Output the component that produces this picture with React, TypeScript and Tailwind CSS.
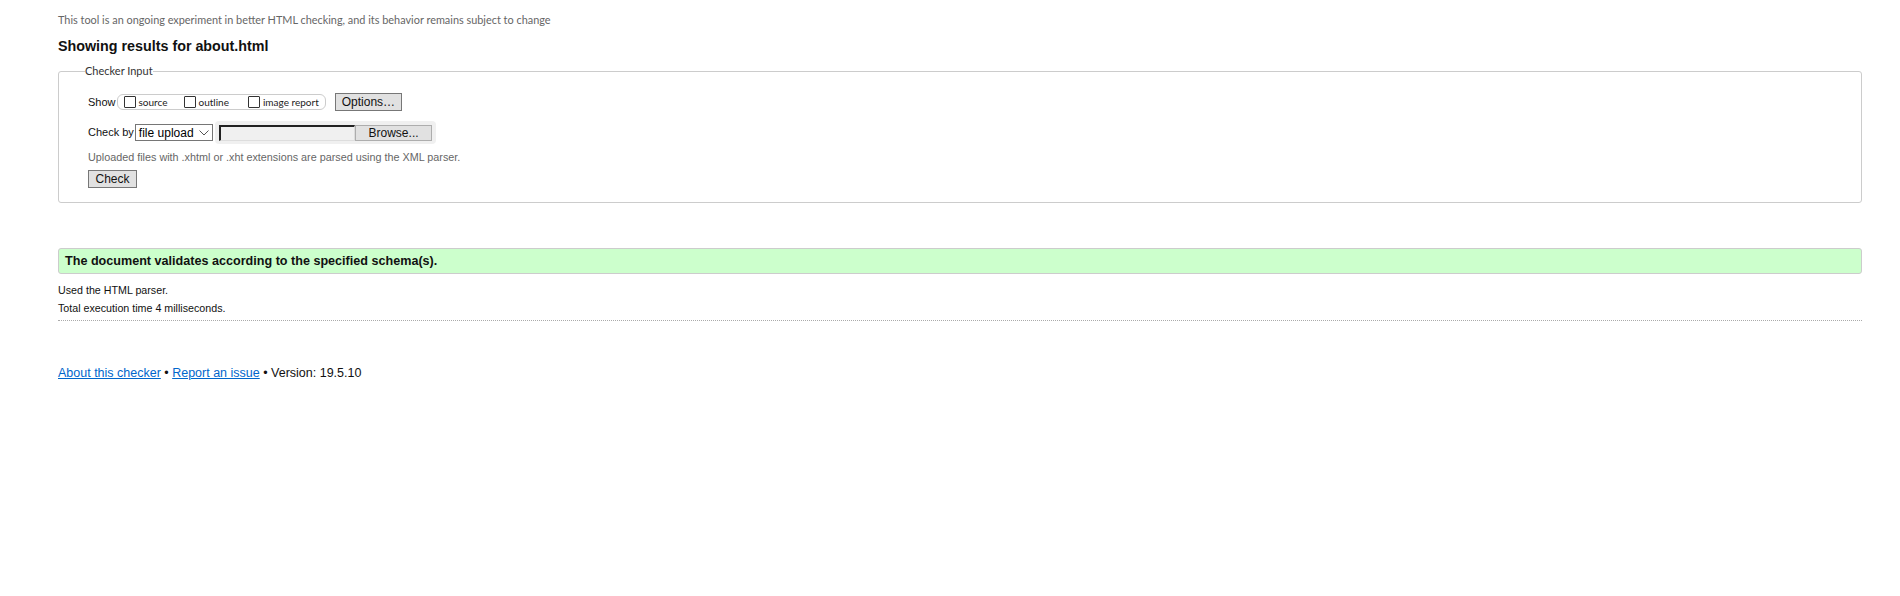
import React from "react";

const sans = "font-['Liberation_Sans',Arial,sans-serif]";
const ui = "font-['Lato','Liberation_Sans',sans-serif]";

function Box({ label }: { label: string }) {
  return (
    <label className="flex items-center gap-[3px]">
      <span className="w-[12px] h-[12px] border border-[#333] bg-white rounded-[1px]" />
      <span className={`${ui} text-[10px] text-[#222]`}>{label}</span>
    </label>
  );
}

export default function App() {
  return (
    <div className={`${sans} bg-white min-h-[596px] pl-[58px] pr-[38px] text-[#111]`}>
      <p className={`${ui} text-[10.9px] text-[#666] pt-[13px] leading-[14px]`}>
        This tool is an ongoing experiment in better HTML checking, and its behavior remains subject to change
      </p>
      <h2 className="text-[14.3px] font-bold mt-[11px] leading-[16px]">Showing results for about.html</h2>

      <fieldset className="mt-[10px] border border-[#ccc] rounded-[3px] px-[29px] pb-[12px]">
        <legend className={`${ui} -ml-[3px] text-[11px] text-[#333] leading-[14px]`}>Checker Input</legend>

        <div className="flex items-center h-[18px] mt-[15px] text-[11px]">
          <span>Show</span>
          <div className="ml-[1px] flex items-center h-[16px] border border-[#ccc] rounded-[6px] pl-[6px] pr-[6px]">
            <Box label="source" />
            <span className="w-[16px]" />
            <Box label="outline" />
            <span className="w-[19px]" />
            <Box label="image report" />
          </div>
          <button className="ml-[9px] h-[18px] px-[6px] bg-[#e1e1e1] border border-[#777] text-[12px] leading-none">
            Options…
          </button>
        </div>

        <div className="flex items-center h-[23px] mt-[10px] text-[11px]">
          <span>Check by</span>
          <div className="ml-[1px] flex items-center h-[17px] w-[78px] border border-[#767676] pl-[3px] pr-[3px] text-[12px] text-black">
            <span className="flex-1">file upload</span>
            <svg width="10" height="6" viewBox="0 0 10 6" fill="none" stroke="#555" strokeWidth="1">
              <path d="M0.5 0.5L5 5L9.5 0.5" />
            </svg>
          </div>
          <div className="ml-[2px] flex items-center h-[23px] bg-[#f0f0f0] rounded-[4px] px-[4px] w-[221px]">
            <div className="h-[16px] w-[137px] bg-[#f0f0f0] border-t-[2px] border-l-[2px] border-b border-r border-t-[#222] border-l-[#222] border-b-[#ddd] border-r-[#ddd]" />
            <button className="h-[16px] w-[77px] bg-[#e1e1e1] border border-[#adadad] text-[12px] leading-none">
              Browse...
            </button>
          </div>
        </div>

        <p className="mt-[6px] text-[10.8px] leading-[14px] text-[#666]">
          Uploaded files with .xhtml or .xht extensions are parsed using the XML parser.
        </p>

        <button className="mt-[6px] h-[18px] w-[49px] bg-[#e1e1e1] border border-[#777] text-[12px] leading-none">
          Check
        </button>
      </fieldset>

      <div className="mt-[45px] h-[26px] flex items-center bg-[#ccffcc] border border-[#ccc] rounded-[3px] pl-[6px]">
        <p className="text-[12.6px] font-bold">The document validates according to the specified schema(s).</p>
      </div>

      <p className="mt-[7px] text-[10.7px] leading-[18px]">Used the HTML parser.</p>
      <p className="text-[10.7px] leading-[18px]">Total execution time 4 milliseconds.</p>
      <div className="mt-[3px] border-t border-dotted border-[#aaa]" />

      <p className="mt-[44px] text-[12.5px] leading-[16px]">
        <a href="#" className="text-[#0066cc] underline">About this checker</a>
        {" • "}
        <a href="#" className="text-[#0066cc] underline">Report an issue</a>
        {" • Version: 19.5.10"}
      </p>
    </div>
  );
}
